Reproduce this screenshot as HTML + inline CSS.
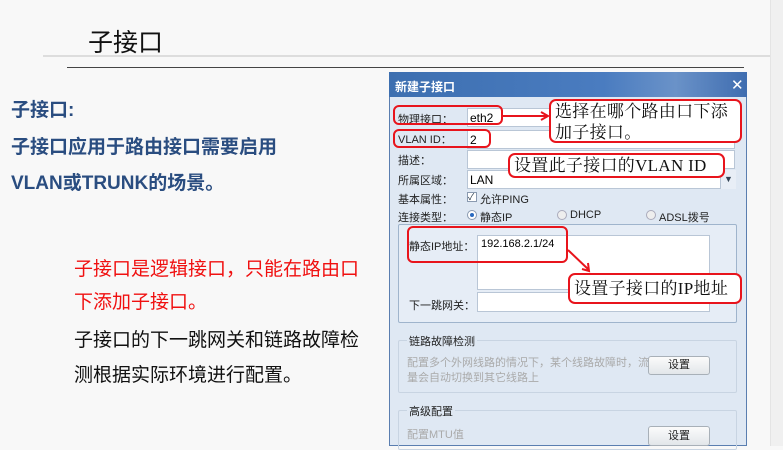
<!DOCTYPE html>
<html><head><meta charset="utf-8"><style>
*{margin:0;padding:0;box-sizing:border-box}
body{width:783px;height:446px;overflow:hidden;background:#f8f8f8;position:relative;font-family:"Liberation Sans","Noto Sans CJK SC",sans-serif}
.a{position:absolute;white-space:nowrap}
.lb{font-size:11px;color:#222}
.in{position:absolute;background:#fff;border:1px solid #b9c6d6}
.rb{position:absolute;border:2px solid #e8141c;border-radius:6px}
.ann{position:absolute;white-space:nowrap;overflow:hidden;background:#fff;border:2px solid #e8141c;border-radius:7px;font-family:"Liberation Serif","Noto Serif CJK SC",serif;font-size:17px;letter-spacing:0.3px;color:#111;line-height:21px;padding:0 4px}
.grp{position:absolute;border:1px solid #c8d4e2;border-radius:2px}
.btn{position:absolute;background:linear-gradient(#fbfbfb,#e2e6ea);border:1px solid #a8b0b8;border-radius:3px;font-size:11px;text-align:center;color:#222}
</style></head><body>
<div class="a" style="left:88px;top:23px;font-size:25px;color:#111">子接口</div>
<div class="a" style="left:43px;top:55px;width:740px;height:2px;background:#ddd"></div>
<div class="a" style="left:67px;top:67px;width:677px;height:1px;background:#444"></div>
<div class="a" style="left:770px;top:0;width:13px;height:446px;background:#f0f0f0;border-left:1px solid #e4e4e4"></div>

<div class="a" style="left:11px;top:95px;font-size:19px;font-weight:bold;color:#2a4d80">子接口:</div>
<div class="a" style="left:11px;top:132px;font-size:19px;font-weight:bold;color:#2a4d80">子接口应用于路由接口需要启用</div>
<div class="a" style="left:11px;top:168px;font-size:19px;font-weight:bold;color:#2a4d80">VLAN或TRUNK的场景。</div>
<div class="a" style="left:74px;top:254px;font-size:19px;color:#f01010">子接口是逻辑接口，只能在路由口</div>
<div class="a" style="left:74px;top:287px;font-size:19px;color:#f01010">下添加子接口。</div>
<div class="a" style="left:74px;top:325px;font-size:19px;color:#111">子接口的下一跳网关和链路故障检</div>
<div class="a" style="left:74px;top:360px;font-size:19px;color:#111">测根据实际环境进行配置。</div>

<div class="a" style="left:389px;top:72px;width:358px;height:374px;background:#dfe8f3;border:1px solid #5a7eb0"></div>
<div class="a" style="left:389px;top:72px;width:358px;height:25px;background:linear-gradient(90deg,#3d6fb0,#4a7cc0 60%,#6a92c8 80%,#3f6db0);"></div>
<div class="a" style="left:395px;top:78px;font-size:12px;color:#fff;font-weight:bold">新建子接口</div>
<div class="a" style="left:731px;top:76px;font-size:15px;color:#fff">✕</div>

<div class="a lb" style="left:398px;top:111px">物理接口：</div>
<div class="in" style="left:467px;top:108px;width:268px;height:19px"></div>
<div class="a" style="left:470px;top:111px;font-size:12px">eth2</div>
<div class="a lb" style="left:398px;top:131px">VLAN ID：</div>
<div class="in" style="left:467px;top:130px;width:268px;height:19px"></div>
<div class="a" style="left:470px;top:133px;font-size:12px">2</div>
<div class="a lb" style="left:398px;top:152px">描述：</div>
<div class="in" style="left:467px;top:150px;width:268px;height:19px"></div>
<div class="a lb" style="left:398px;top:172px">所属区域：</div>
<div class="in" style="left:467px;top:170px;width:268px;height:19px"></div>
<div class="a" style="left:470px;top:173px;font-size:12px">LAN</div>
<div class="a" style="left:720px;top:170px;width:16px;height:19px;background:#e8eef6;border-left:1px solid #b9c6d6;font-size:9px;text-align:center;line-height:19px;color:#345">▼</div>
<div class="a lb" style="left:398px;top:191px">基本属性：</div>
<div class="a" style="left:467px;top:192px;width:10px;height:10px;background:#fff;border:1px solid #8a9ab0;font-size:9px;line-height:8px;color:#234">✓</div>
<div class="a lb" style="left:480px;top:191px">允许PING</div>
<div class="a lb" style="left:398px;top:209px">连接类型：</div>
<div class="a" style="left:467px;top:210px;width:10px;height:10px;border-radius:50%;background:#fff;border:1px solid #8a9ab0"><div style="margin:2px;width:4px;height:4px;border-radius:50%;background:#2a6ac0"></div></div>
<div class="a lb" style="left:480px;top:209px">静态IP</div>
<div class="a" style="left:557px;top:210px;width:10px;height:10px;border-radius:50%;background:#eee;border:1px solid #aab"></div>
<div class="a lb" style="left:570px;top:209px">DHCP</div>
<div class="a" style="left:646px;top:210px;width:10px;height:10px;border-radius:50%;background:#eee;border:1px solid #aab"></div>
<div class="a lb" style="left:659px;top:209px">ADSL拨号</div>

<div class="grp" style="left:398px;top:224px;width:339px;height:99px;border-color:#9fb4cc;background:#e6edf6"></div>
<div class="a lb" style="left:409px;top:238px">静态IP地址：</div>
<div class="in" style="left:477px;top:235px;width:233px;height:55px"></div>
<div class="a" style="left:481px;top:238px;font-size:11px">192.168.2.1/24</div>
<div class="a lb" style="left:409px;top:297px">下一跳网关：</div>
<div class="in" style="left:477px;top:292px;width:233px;height:20px"></div>

<div class="grp" style="left:398px;top:340px;width:339px;height:53px"></div>
<div class="a lb" style="left:407px;top:333px;background:#dfe8f3;padding:0 2px">链路故障检测</div>
<div class="a" style="left:407px;top:356px;font-size:11px;color:#aaa;line-height:15px">配置多个外网线路的情况下，某个线路故障时，流<br>量会自动切换到其它线路上</div>
<div class="btn" style="left:648px;top:356px;width:62px;height:19px;line-height:17px">设置</div>

<div class="grp" style="left:398px;top:410px;width:339px;height:40px"></div>
<div class="a lb" style="left:407px;top:403px;background:#dfe8f3;padding:0 2px">高级配置</div>
<div class="a" style="left:407px;top:426px;font-size:11px;color:#aaa">配置MTU值</div>
<div class="btn" style="left:648px;top:426px;width:62px;height:20px;line-height:18px">设置</div>

<div class="rb" style="left:393px;top:105px;width:110px;height:20px"></div>
<div class="rb" style="left:393px;top:129px;width:98px;height:19px"></div>
<div class="rb" style="left:407px;top:226px;width:161px;height:37px"></div>
<svg class="a" style="left:0;top:0" width="783" height="446"><g stroke="#e8141c" stroke-width="2" fill="none"><path d="M503 116H547M541 112L548 116L541 120"/><path d="M568 250L589 270M582 269L589 271L588 263"/></g></svg>
<div class="ann" style="left:549px;top:99px;width:193px;height:44px">选择在哪个路由口下添<br>加子接口。</div>
<div class="ann" style="left:508px;top:153px;width:217px;height:25px;line-height:21px">设置此子接口的VLAN ID</div>
<div class="ann" style="left:568px;top:273px;width:174px;height:31px;line-height:27px">设置子接口的IP地址</div>
</body></html>
